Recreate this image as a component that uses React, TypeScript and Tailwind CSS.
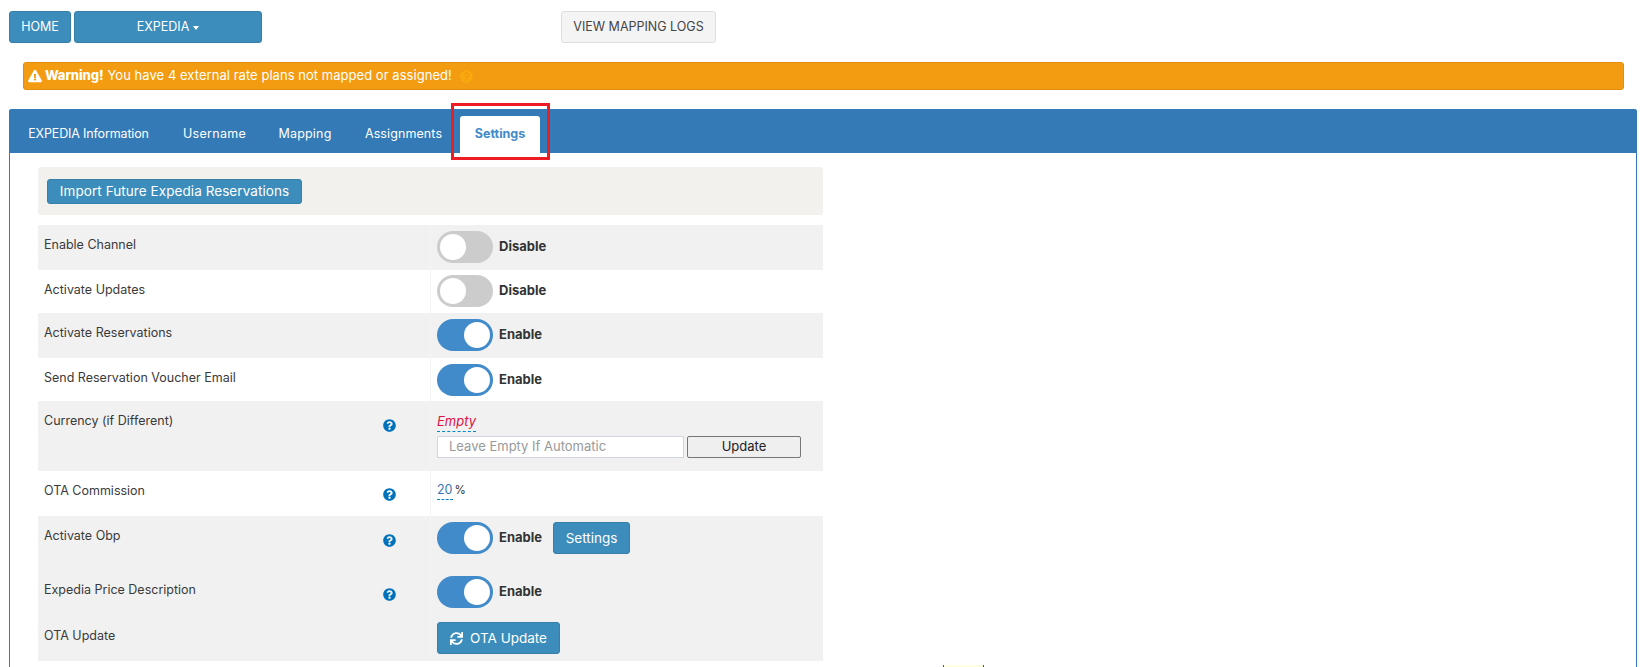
import { FaExclamationTriangle, FaQuestionCircle, FaSync } from "react-icons/fa";
import type { ReactNode } from "react";

const btn =
  "flex items-center justify-center rounded-[3px] border border-[#367fa9] bg-[#3c8dbc] text-white";

function Toggle({ on }: { on: boolean }) {
  return (
    <div className="flex items-center">
      <div
        className={
          on
            ? "flex h-8 w-14 items-center justify-end rounded-full bg-[#428bca] pr-[3px]"
            : "flex h-8 w-14 items-center justify-start rounded-full bg-[#cccccc] pl-[3px]"
        }
      >
        <div className="h-[26px] w-[26px] rounded-full bg-white" />
      </div>
      <span className="ml-[6px] text-[13px] font-bold text-[#333]">{on ? "Enable" : "Disable"}</span>
    </div>
  );
}

function Help() {
  return (
    <div className="flex w-[26px] justify-center text-[13px] text-[#0072bc]">
      <FaQuestionCircle />
    </div>
  );
}

function Row({
  label,
  help,
  height,
  helpTop,
  white,
  children,
}: {
  label: string;
  help?: boolean;
  height: string;
  helpTop?: string;
  white?: boolean;
  children: ReactNode;
}) {
  return (
    <div className={`flex ${height} ${white ? "bg-white" : "bg-[#f1f1f1]"}`}>
      <div className="flex w-[393px] border-r border-[#f4f4f4] pl-[6px] pr-[28px]">
        <div className="flex-1 pt-[11px] text-[12.5px] leading-[18px] text-[#3a3a3a]">{label}</div>
        {help && (
          <div className={helpTop}>
            <Help />
          </div>
        )}
      </div>
      <div className="flex-1 pl-[6px]">{children}</div>
    </div>
  );
}

export default function App() {
  return (
    <div className="h-[667px] overflow-hidden bg-white pl-[9px] pr-[10px] pt-[11px] font-['Inter',sans-serif]">
      <div className="flex h-8 text-[12.5px]">
        <button className={`${btn} w-[62px]`}>HOME</button>
        <button className={`${btn} ml-[3px] w-[188px] gap-1`}>
          EXPEDIA
          <span className="mt-[1px] h-0 w-0 border-x-[3.5px] border-t-[4px] border-x-transparent border-t-white" />
        </button>
        <button className="ml-[299px] flex w-[155px] items-center justify-center rounded-[3px] border border-[#dddddd] bg-[#f4f4f4] text-[#444]">
          VIEW MAPPING LOGS
        </button>
      </div>

      <div className="ml-[14px] mr-[13px] mt-[19px] flex h-7 items-center rounded-[3px] border border-[#e08e0b] bg-[#f39c12] pl-[4px] text-[13px] text-white">
        <FaExclamationTriangle className="text-[14px]" />
        <span className="ml-[3px] font-extrabold tracking-[-0.1px]">Warning!</span>
        <span className="ml-[4px] tracking-[0.04px]">You have 4 external rate plans not mapped or assigned!</span>
        <FaQuestionCircle className="ml-[8px] text-[13px] text-[#f9a80d]" />
      </div>

      <div className="mt-[19px] h-[600px] rounded-t-[3px] border-x border-[#337ab7]">
        <div className="-mx-px flex h-11 items-end rounded-t-[3px] bg-[#337ab7] pl-[1px] text-[12.5px] text-white">
          <div className="flex h-[37px] w-[157px] items-center justify-center tracking-[-0.15px]">EXPEDIA Information</div>
          <div className="flex h-[37px] w-[95px] items-center justify-center tracking-[0.3px]">Username</div>
          <div className="flex h-[37px] w-[86px] items-center justify-center tracking-[0.2px]">Mapping</div>
          <div className="flex h-[37px] w-[111px] items-center justify-center tracking-[0.1px]">Assignments</div>
          <div className="ml-[1px] flex h-[37px] w-[80px] items-center justify-center rounded-t-[3px] bg-white font-bold text-[#428bca]">
            Settings
          </div>
        </div>

        <div className="ml-[28px] mt-[14px] w-[785px]">
          <div className="flex h-12 items-center rounded-[3px] bg-[#f3f1ed] pl-[9px]">
            <button className={`${btn} h-[25px] w-[255px] text-[13.5px] tracking-[0.07px]`}>Import Future Expedia Reservations</button>
          </div>

          <div className="mt-[10px]">
            <Row label="Enable Channel" height="h-[45px]">
              <div className="pt-[6px]"><Toggle on={false} /></div>
            </Row>
            <Row label="Activate Updates" height="h-[43px]" white>
              <div className="pt-[5px]"><Toggle on={false} /></div>
            </Row>
            <Row label="Activate Reservations" height="h-[45px]">
              <div className="pt-[6px]"><Toggle on /></div>
            </Row>
            <Row label="Send Reservation Voucher Email" height="h-[43px]" white>
              <div className="pt-[6px]"><Toggle on /></div>
            </Row>
            <Row label="Currency (if Different)" help height="h-[70px]" helpTop="pt-[18px]">
              <div className="pt-[11px]">
                <div className="flex h-[20px]">
                  <span className="border-b border-dashed border-[#0088cc] text-[13px] italic leading-[18px] text-[#dd1144]">
                    Empty
                  </span>
                </div>
                <div className="mt-[4px] flex h-[22px]">
                  <input
                    readOnly
                    placeholder="Leave Empty If Automatic"
                    className="w-[247px] border border-[#d2d6de] bg-white pl-[11px] text-[13px] text-[#333] placeholder:text-[#999]"
                  />
                  <button className="ml-[3px] w-[114px] rounded-[2px] border border-[#767676] bg-[#efefef] text-[13px] text-[#222]">
                    Update
                  </button>
                </div>
              </div>
            </Row>
            <Row label="OTA Commission" help height="h-[45px]" helpTop="pt-[17px]" white>
              <div className="flex gap-[2px] pt-[10px] text-[12.5px] leading-[18px] text-[#333]">
                <span className="border-b border-dashed border-[#0088cc] text-[#337ab7]">20</span>
                <span className="text-[11.5px]">%</span>
              </div>
            </Row>
            <Row label="Activate Obp" help height="h-[54px]" helpTop="pt-[18px]">
              <div className="flex items-start pt-[6px]">
                <Toggle on />
                <button className={`${btn} ml-[11px] h-8 w-[77px] text-[13.5px]`}>Settings</button>
              </div>
            </Row>
            <Row label="Expedia Price Description" help height="h-[46px]" helpTop="pt-[18px]">
              <div className="pt-[6px]"><Toggle on /></div>
            </Row>
            <Row label="OTA Update" height="h-[45px]">
              <div className="pt-[6px]">
                <button className={`${btn} h-8 w-[123px] gap-[7px] text-[13.5px]`}>
                  <FaSync className="text-[13px]" />
                  OTA Update
                </button>
              </div>
            </Row>
          </div>
        </div>
      </div>

      {/* red annotation box drawn over the active tab */}
      <div className="absolute left-[451px] top-[103px] h-[57px] w-[99px] border-[3px] border-[#ed1c24]" />
      {/* edge of a tooltip cut off by the window */}
      <div className="absolute left-[943px] top-[665px] h-[2px] w-[41px] border-x border-[#555] bg-[#ffffe0]" />
    </div>
  );
}
